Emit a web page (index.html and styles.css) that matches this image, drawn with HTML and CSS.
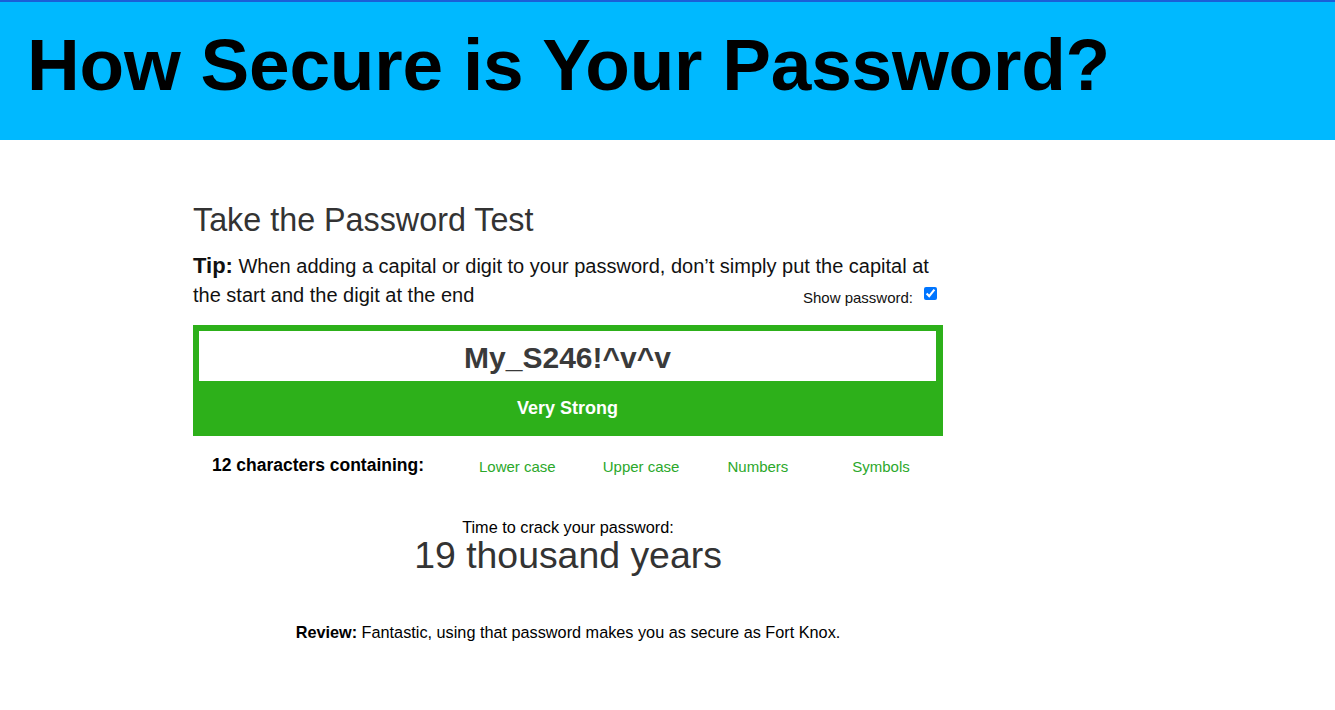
FILE: index.html
```html
<!DOCTYPE html>
<html lang="en">
<head>
<meta charset="utf-8">
<title>How Secure is Your Password?</title>
<link rel="stylesheet" href="styles.css">
</head>
<body>
<header class="banner">
  <h1 class="banner-title">How Secure is Your Password?</h1>
</header>
<main class="test">
  <h2 class="test-title">Take the Password Test</h2>
  <p class="tip"><strong class="tip-label">Tip:</strong> When adding a capital or digit to your password, don’t simply put the capital at the start and the digit at the end<label class="show"><span>Show password:</span><input class="show-box" type="checkbox" checked></label></p>
  <div class="meter">
    <input class="pw" type="text" value="My_S246!^v^v">
    <div class="strength">Very Strong</div>
  </div>
  <div class="chars">
    <div class="chars-count">12 characters containing:</div>
    <div class="chars-item">Lower case</div>
    <div class="chars-item">Upper case</div>
    <div class="chars-item">Numbers</div>
    <div class="chars-item">Symbols</div>
  </div>
  <div class="crack">
    <div class="crack-label">Time to crack your password:</div>
    <div class="crack-time">19 thousand years</div>
  </div>
  <p class="review"><strong>Review:</strong> Fantastic, using that password makes you as secure as Fort Knox.</p>
</main>
</body>
</html>
```
FILE: styles.css
```css
html, body {
  margin: 0;
  padding: 0;
  background: #ffffff;
  font-family: "Liberation Sans", Arial, sans-serif;
  color: #000;
}

.banner {
  background: #00b9ff;
  border-top: 2px solid #1a5fd8;
  padding: 27px 0 39px 27px;
}

.banner-title {
  margin: 0;
  font-size: 73px;
  line-height: 72px;
  font-weight: 700;
  color: #000;
  letter-spacing: -0.2px;
}

.test {
  width: 750px;
  margin-left: 193px;
}

.test-title {
  margin: 63px 0 0;
  font-size: 32.3px;
  line-height: 35px;
  font-weight: 400;
  color: #333;
}

.tip {
  margin: 14px 0 0;
  font-size: 20px;
  line-height: 29px;
  color: #111;
}

.tip-label {
  font-size: 22px;
  line-height: 20px;
}

.show {
  float: right;
  display: flex;
  align-items: center;
  font-size: 15px;
  line-height: 29px;
  margin-right: 6px;
}

.show span {
  padding-top: 2px;
}

.show-box {
  width: 13px;
  height: 13px;
  margin: 0 0 6px 11px;
}

.meter {
  margin-top: 15px;
  background: #2db01a;
  padding: 6px 7px 0 6px;
}

.pw {
  display: block;
  box-sizing: border-box;
  width: 100%;
  height: 50px;
  border: none;
  outline: none;
  background: #fff;
  text-align: center;
  font-family: "Liberation Sans", Arial, sans-serif;
  font-size: 30px;
  font-weight: 700;
  color: #3a3a3a;
  padding: 4px 0 0;
}

.strength {
  height: 55px;
  line-height: 55px;
  text-align: center;
  font-size: 18px;
  font-weight: 700;
  color: #fff;
}

.chars {
  display: grid;
  grid-template-columns: 255px repeat(4, 1fr);
  margin-top: 19px;
}

.chars-count {
  padding-left: 19px;
  font-size: 17.5px;
  line-height: 20px;
  font-weight: 700;
}

.chars-item {
  padding: 2px 0 0 31px;
  font-size: 15px;
  line-height: 20px;
  color: #2ba82b;
}

.chars-item:nth-child(4) {
  padding-left: 32px;
}

.chars-item:nth-child(5) {
  padding-left: 33px;
}

.crack {
  margin-top: 41px;
  text-align: center;
}

.crack-label {
  font-size: 16.25px;
  line-height: 18px;
}

.crack-time {
  font-size: 37.4px;
  line-height: 38px;
  color: #333;
}

.review {
  margin: 49px 0 0;
  text-align: center;
  font-size: 16.25px;
  line-height: 18px;
}
```
